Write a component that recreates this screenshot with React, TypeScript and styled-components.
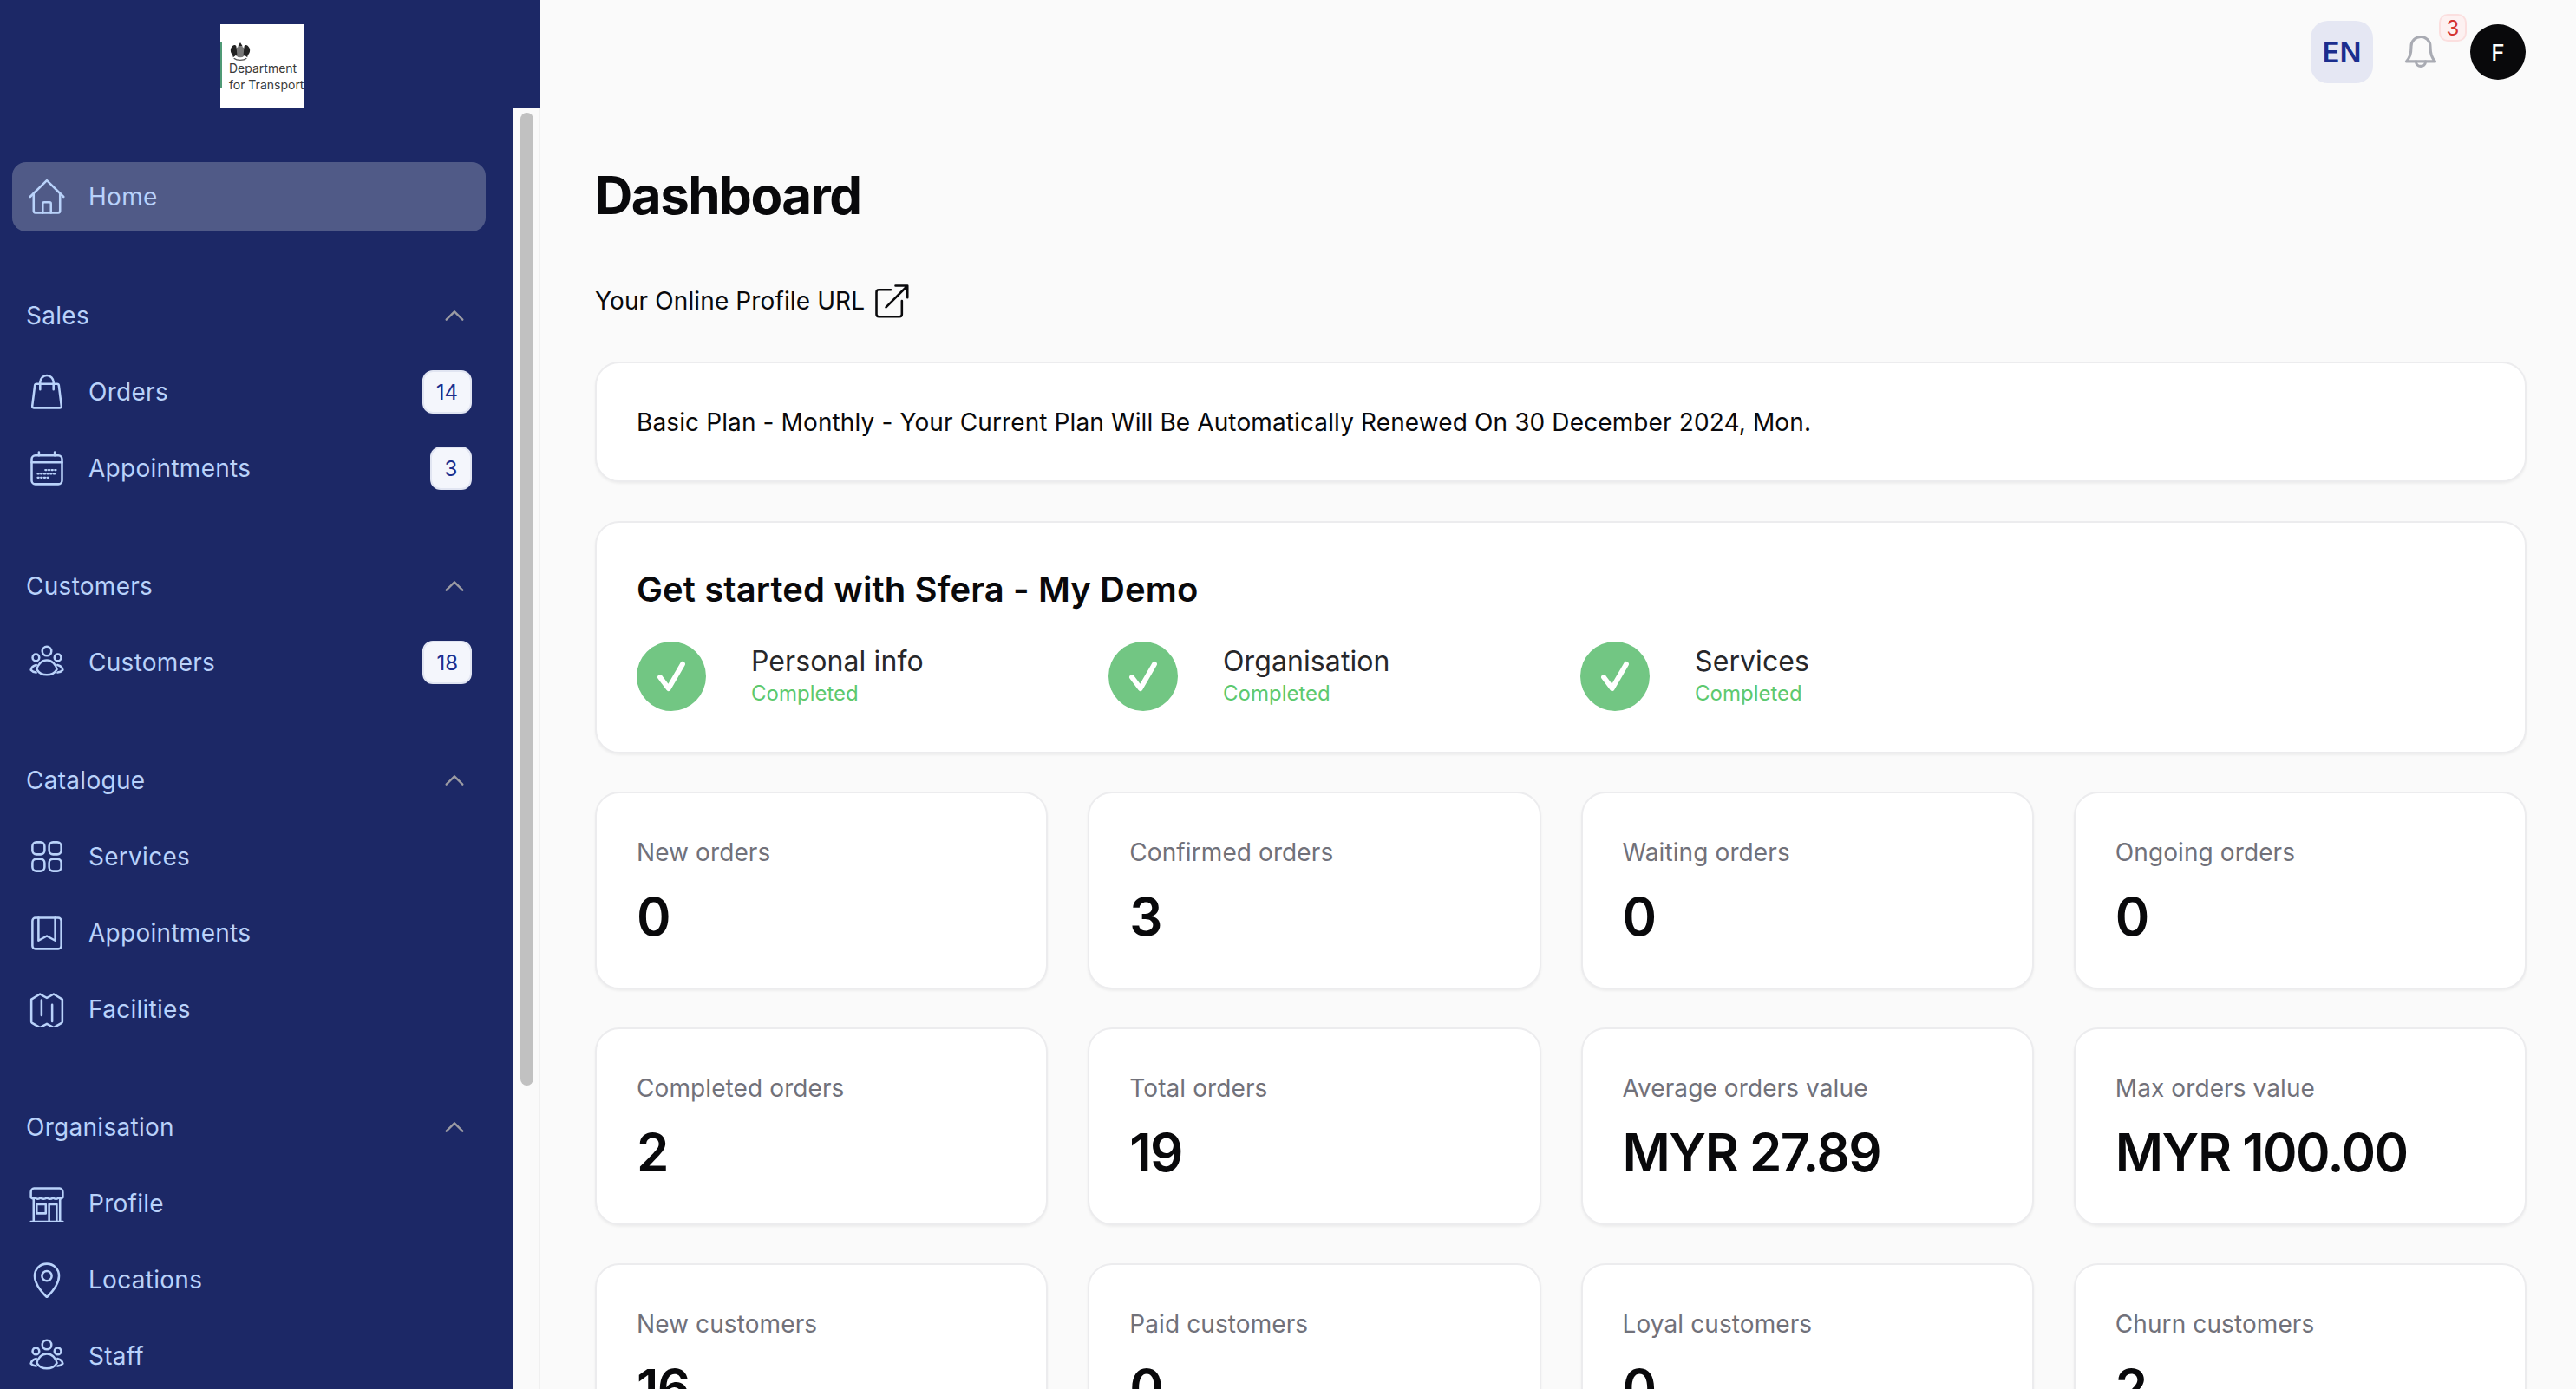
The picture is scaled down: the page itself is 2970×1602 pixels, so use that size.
import React from 'react';
import styled, { createGlobalStyle } from 'styled-components';

const GlobalStyle = createGlobalStyle`
    html, body {
        margin: 0;
        height: 100%;
        overflow: hidden;
        background: #fafafa;
        font-family: "Inter", "Liberation Sans", sans-serif;
    }
    * { box-sizing: border-box; }
`;

const Page = styled.div`
    display: flex;
    width: 2970px;
    height: 1602px;
    overflow: hidden;
`;
const Sidebar = styled.aside`
    display: flex;
    flex-direction: column;
    flex: 0 0 622px;
    height: 100%;
    background: #1c2866;
`;
const LogoBar = styled.div`
    flex: 0 0 124px;
    padding: 28px 0 0 254px;
`;
const Logo = styled.div`
    position: relative;
    width: 96px;
    height: 96px;
    padding: 20px 0 0 10px;
    background: #fff;
    overflow: hidden;
    color: #3a3a3a;
    font-size: 14px;
    line-height: 19px;
    white-space: nowrap;
    &::before {
        content: "";
        position: absolute;
        left: 0;
        top: 20px;
        width: 2px;
        height: 53px;
        background: #4f9a76;
    }
    svg { display: block; margin-bottom: -1px; }
`;
const SideBody = styled.div`
    display: flex;
    flex: 1;
    min-height: 0;
`;
const Nav = styled.nav`
    flex: 0 0 592px;
    padding: 63px 32px 0 14px;
    overflow: hidden;
    letter-spacing: 0.28px;
`;
const Track = styled.div`
    flex: 0 0 30px;
    padding: 6px 6px 0 8px;
    background: #fafafa;
    border-right: 2px solid #f0f0f0;
`;
const Thumb = styled.div`
    height: 1122px;
    width: 15px;
    border-radius: 8px;
    background: #c1c1c1;
`;
const HomeLink = styled.a`
    display: flex;
    align-items: center;
    gap: 27px;
    height: 80px;
    padding-left: 19px;
    border-radius: 16px;
    background: #505a87;
    color: #b9d2fa;
    font-size: 28px;
`;
const Section = styled.section`
    margin-top: 48px;
    &:first-of-type { margin-top: 53px; }
`;
const SectionHead = styled.div`
    display: flex;
    align-items: center;
    justify-content: space-between;
    height: 88px;
    padding: 0 22px 0 16px;
    color: #b9d2fa;
    font-size: 28px;
    svg { width: 28px; height: 28px; color: #9b9ba3; }
`;
const Row = styled.a`
    display: flex;
    align-items: center;
    gap: 27px;
    height: 88px;
    padding: 0 16px 0 19px;
    color: #b9d2fa;
    font-size: 28px;
`;
const RowLabel = styled.span`
    flex: 1;
`;
const IconBox = styled.svg`
    flex: 0 0 42px;
    width: 42px;
    height: 42px;
    fill: none;
    stroke: currentColor;
    stroke-width: 1.45;
    stroke-linecap: round;
    stroke-linejoin: round;
`;
const CountBadge = styled.span`
    display: flex;
    align-items: center;
    justify-content: center;
    min-width: 48px;
    height: 50px;
    padding: 0 14px;
    border: 2px solid #e1e5f2;
    border-radius: 12px;
    background: #f4f6fc;
    color: #1b2e8e;
    font-size: 24px;
    letter-spacing: 0;
`;
const Main = styled.main`
    flex: 1;
    min-width: 0;
    padding: 0 57px 0 63px;
    background: #fafafa;
`;
const TopBar = styled.header`
    display: flex;
    justify-content: flex-end;
    align-items: flex-start;
    height: 189px;
    padding: 24px 1px 0 0;
`;
const LangButton = styled.div`
    display: flex;
    align-items: center;
    justify-content: center;
    width: 72px;
    height: 72px;
    border-radius: 20px;
    background: #e5e7f3;
    color: #1b2e8e;
    font-size: 33px;
    font-weight: 600;
`;
const BellWrap = styled.div`
    position: relative;
    width: 112px;
    height: 72px;
    svg {
        position: absolute;
        left: 33px;
        top: 13px;
        width: 44px;
        height: 44px;
        fill: none;
        stroke: #a9abb3;
        stroke-width: 1.7;
        stroke-linecap: round;
        stroke-linejoin: round;
    }
`;
const NoticeBadge = styled.span`
    position: absolute;
    left: 76px;
    top: -8px;
    display: flex;
    align-items: center;
    justify-content: center;
    width: 32px;
    height: 32px;
    border: 2px solid #fbdfdf;
    border-radius: 10px;
    background: #fdf1f1;
    color: #d5342f;
    font-size: 24px;
`;
const Avatar = styled.div`
    display: flex;
    align-items: center;
    justify-content: center;
    width: 64px;
    height: 64px;
    margin-top: 4px;
    border-radius: 50%;
    background: #09090b;
    color: #fff;
    font-size: 26px;
    font-weight: 500;
`;
const PageTitle = styled.h1`
    margin: 0;
    color: #09090b;
    font-size: 60px;
    line-height: 72px;
    font-weight: 700;
    letter-spacing: -1.5px;
`;
const ProfileUrl = styled.div`
    display: flex;
    align-items: center;
    gap: 8px;
    margin-top: 64px;
    height: 44px;
    color: #09090b;
    font-size: 28px;
    letter-spacing: 0.12px;
    svg {
        width: 44px;
        height: 44px;
        fill: none;
        stroke: #09090b;
        stroke-width: 1.4;
        stroke-linecap: round;
        stroke-linejoin: round;
    }
`;
const Card = styled.div`
    border: 2px solid #ececee;
    border-radius: 28px;
    background: #fff;
    box-shadow: 0 2px 3px rgba(0, 0, 0, 0.05);
`;
const PlanCard = styled(Card)`
    display: flex;
    align-items: center;
    height: 139px;
    margin-top: 48px;
    padding: 0 46px;
    color: #09090b;
    font-size: 28px;
    letter-spacing: 0.12px;
`;
const StartCard = styled(Card)`
    height: 268px;
    margin-top: 45px;
    padding: 50px 46px 0;
`;
const StartTitle = styled.h2`
    margin: 0;
    color: #09090b;
    font-size: 40px;
    line-height: 54px;
    font-weight: 600;
    letter-spacing: 0.1px;
`;
const Steps = styled.div`
    display: flex;
    margin-top: 33px;
`;
const Step = styled.div`
    display: flex;
    align-items: center;
    gap: 52px;
    flex: 0 0 544px;
`;
const StepCheck = styled.div`
    display: flex;
    align-items: center;
    justify-content: center;
    width: 80px;
    height: 80px;
    border-radius: 50%;
    background: #72c683;
    svg {
        width: 52px;
        height: 52px;
        fill: none;
        stroke: #fff;
        stroke-width: 2.7;
        stroke-linecap: round;
        stroke-linejoin: round;
    }
`;
const StepText = styled.div`
    padding-bottom: 2px;
`;
const StepName = styled.div`
    color: #27272a;
    font-size: 32px;
    line-height: 40px;
    letter-spacing: 0.1px;
`;
const StepState = styled.div`
    margin-top: 2px;
    color: #5dc96e;
    font-size: 24px;
    line-height: 30px;
`;
const StatGrid = styled.div`
    display: grid;
    grid-template-columns: repeat(4, 1fr);
    gap: 44px 46px;
    margin-top: 44px;
`;
const StatCard = styled(Card)`
    height: 228px;
    padding: 50px 46px 0;
`;
const StatLabel = styled.div`
    color: #71717a;
    font-size: 28px;
    line-height: 36px;
    letter-spacing: 0.1px;
`;
const StatValue = styled.div`
    margin-top: 18px;
    color: #09090b;
    font-size: 60px;
    line-height: 76px;
    font-weight: 600;
    letter-spacing: -1.5px;
`;

const icons: Record<string, React.ReactNode> = {
    home: <><path d="M1 12 12 1.200 23 12" /><path d="M3.300 10v11.300c0 .7.5 1.200 1.200 1.200h15c.7 0 1.200-.5 1.200-1.200V10" /><path d="M9.300 22.500v-6c0-.5.4-.9.9-.9h3.600c.5 0 .9.4.9.9v6" /></>,
    bag: <><path d="M5.200 6.700h13.600c.6 0 1 .4 1.100 1l1.700 13.500c.1.800-.4 1.300-1.200 1.300H3.600c-.8 0-1.300-.5-1.200-1.300l1.700-13.500c.1-.6.5-1 1.100-1Z" /><path d="M7.600 10.400V5.600a4.400 4.400 0 0 1 8.800 0v4.800" /></>,
    calendar: <><rect x="2" y="3.600" width="20" height="18.900" rx="2.400" /><path d="M2 8.200h20M6.800 1.400v2.200M17.200 1.400v2.200" /><path strokeWidth="1.300" strokeDasharray="0.7 1.400" d="M6 18.200h8M6 15.700h12M11 13.200h7" /></>,
    users: <><circle cx="12" cy="4.600" r="3" /><circle cx="4.800" cy="8.800" r="2.200" /><circle cx="19.200" cy="8.800" r="2.200" /><path d="M12 10.600c-3.400 0-6 2.600-6.600 6 1.300 2.200 3.800 3.600 6.600 3.600s5.300-1.400 6.600-3.600c-.6-3.400-3.200-6-6.600-6Z" /><path d="M5 13.700c-2 .4-3.200 1.700-3.500 3.300.8 1 2 1.500 3.400 1.600M19 13.700c2 .4 3.200 1.700 3.500 3.300-.8 1-2 1.500-3.400 1.600" /></>,
    grid: <><rect x="2.500" y="2.500" width="8" height="8" rx="2.600" /><rect x="13.500" y="2.500" width="8" height="8" rx="2.600" /><rect x="2.500" y="13.500" width="8" height="8" rx="2.600" /><rect x="13.500" y="13.500" width="8" height="8" rx="2.600" /></>,
    book: <><rect x="2.500" y="2" width="19" height="20.500" rx="2" /><path d="M6.500 2v15l5.500-3 5.500 3V2" /></>,
    map: <><path d="M1.800 5.500 7.500 2c1.500.9 3 1.800 4.500 2.500C13.500 3.800 15 2.900 16.500 2l5.700 3.500v14.800c0 .4-.2.6-.5.8l-5.200 3c-1.500-.9-3-1.800-4.500-2.500-1.500.7-3 1.600-4.500 2.500l-5.200-3c-.3-.2-.5-.4-.5-.8V5.500Z" /><path d="M8.500 6v10M15.500 9v11" /></>,
    store: <><path d="M3.500 2h17c1 0 2 1 2 2.500V8c-1 1-2 1-3 .3-.9.9-2.400.9-3.500 0-1 .9-2.900.9-4 0-1.100.9-3 .9-4 0-1.100.9-2.600.9-3.500 0-1 .7-2 .7-3-.3V4.500C1.500 3 2.500 2 3.500 2Z" /><path d="M3.300 9v14.200M20.700 9v14.200M1.500 24h21" /><rect x="5.300" y="12.500" width="6" height="6" /><path d="M13.500 23.500V12.500h5v11" /></>,
    pin: <><path d="M12 1.500c-4.500 0-8 3.300-8 8 0 5 4 10 8 14 4-4 8-9 8-14 0-4.700-3.500-8-8-8Z" /><circle cx="12" cy="9.500" r="3.200" /></>,
};

function Icon({ name }: { name: string }) {
    return <IconBox viewBox="0 0 24 24">{icons[name]}</IconBox>;
}

const sections = [
    {
        title: 'Sales',
        items: [
            { icon: 'bag', label: 'Orders', count: 14 },
            { icon: 'calendar', label: 'Appointments', count: 3 },
        ],
    },
    { title: 'Customers', items: [{ icon: 'users', label: 'Customers', count: 18 }] },
    {
        title: 'Catalogue',
        items: [
            { icon: 'grid', label: 'Services' },
            { icon: 'book', label: 'Appointments' },
            { icon: 'map', label: 'Facilities' },
        ],
    },
    {
        title: 'Organisation',
        items: [
            { icon: 'store', label: 'Profile' },
            { icon: 'pin', label: 'Locations' },
            { icon: 'users', label: 'Staff' },
        ],
    },
];

const steps = ['Personal info', 'Organisation', 'Services'];

const stats = [
    ['New orders', '0'],
    ['Confirmed orders', '3'],
    ['Waiting orders', '0'],
    ['Ongoing orders', '0'],
    ['Completed orders', '2'],
    ['Total orders', '19'],
    ['Average orders value', 'MYR 27.89'],
    ['Max orders value', 'MYR 100.00'],
    ['New customers', '16'],
    ['Paid customers', '0'],
    ['Loyal customers', '0'],
    ['Churn customers', '2'],
];

function App() {
    return (
        <Page>
            <GlobalStyle />
            <Sidebar>
                <LogoBar>
                    <Logo>
                        <svg width="26" height="22" viewBox="0 0 26 24">
                            <circle cx="13" cy="13" r="7" fill="#777" />
                            <path d="M13 1l3 5h-6zM1 9c2-5 6-6 7-3l1 10-5 4c0-4-4-5-3-11ZM25 9c-2-5-6-6-7-3l-1 10 5 4c0-4 4-5 3-11Z" fill="#222" />
                            <path d="M5 21c4 3 12 3 16 0" stroke="#555" strokeWidth="1.500" fill="none" />
                        </svg>
                        Department<br />for Transport
                    </Logo>
                </LogoBar>
                <SideBody>
                    <Nav>
                        <HomeLink><Icon name="home" />Home</HomeLink>
                        {sections.map((section) => (
                            <Section key={section.title}>
                                <SectionHead>
                                    {section.title}
                                    <svg viewBox="0 0 24 24" fill="none" stroke="currentColor" strokeWidth="2" strokeLinecap="round" strokeLinejoin="round">
                                        <path d="M4 16l8-8 8 8" />
                                    </svg>
                                </SectionHead>
                                {section.items.map((item) => (
                                    <Row key={item.label}>
                                        <Icon name={item.icon} />
                                        <RowLabel>{item.label}</RowLabel>
                                        {item.count !== undefined && <CountBadge>{item.count}</CountBadge>}
                                    </Row>
                                ))}
                            </Section>
                        ))}
                    </Nav>
                    <Track><Thumb /></Track>
                </SideBody>
            </Sidebar>
            <Main>
                <TopBar>
                    <LangButton>EN</LangButton>
                    <BellWrap>
                        <svg viewBox="0 0 24 24">
                            <path d="M12 3a6 6 0 0 0-6 6c0 5-1 7-3 9.500h18c-2-2.500-3-4.500-3-9.500a6 6 0 0 0-6-6Z" />
                            <path d="M9 18.500a3 3 0 0 0 6 0" />
                        </svg>
                        <NoticeBadge>3</NoticeBadge>
                    </BellWrap>
                    <Avatar>F</Avatar>
                </TopBar>
                <PageTitle>Dashboard</PageTitle>
                <ProfileUrl>
                    Your Online Profile URL
                    <svg viewBox="0 0 24 24">
                        <path d="M12 5H4.500A1.500 1.500 0 0 0 3 6.500v14A1.500 1.500 0 0 0 4.500 22h13a1.500 1.500 0 0 0 1.500-1.500V12" />
                        <path d="M9 16 22 3M15 2.500h7.500V10" />
                    </svg>
                </ProfileUrl>
                <PlanCard>Basic Plan - Monthly - Your Current Plan Will Be Automatically Renewed On 30 December 2024, Mon.</PlanCard>
                <StartCard>
                    <StartTitle>Get started with Sfera - My Demo</StartTitle>
                    <Steps>
                        {steps.map((step) => (
                            <Step key={step}>
                                <StepCheck>
                                    <svg viewBox="0 0 24 24"><path d="M6 12.500l4.500 6 7.500-13" /></svg>
                                </StepCheck>
                                <StepText>
                                    <StepName>{step}</StepName>
                                    <StepState>Completed</StepState>
                                </StepText>
                            </Step>
                        ))}
                    </Steps>
                </StartCard>
                <StatGrid>
                    {stats.map(([label, value]) => (
                        <StatCard key={label}>
                            <StatLabel>{label}</StatLabel>
                            <StatValue>{value}</StatValue>
                        </StatCard>
                    ))}
                </StatGrid>
            </Main>
        </Page>
    );
}

export default App;
